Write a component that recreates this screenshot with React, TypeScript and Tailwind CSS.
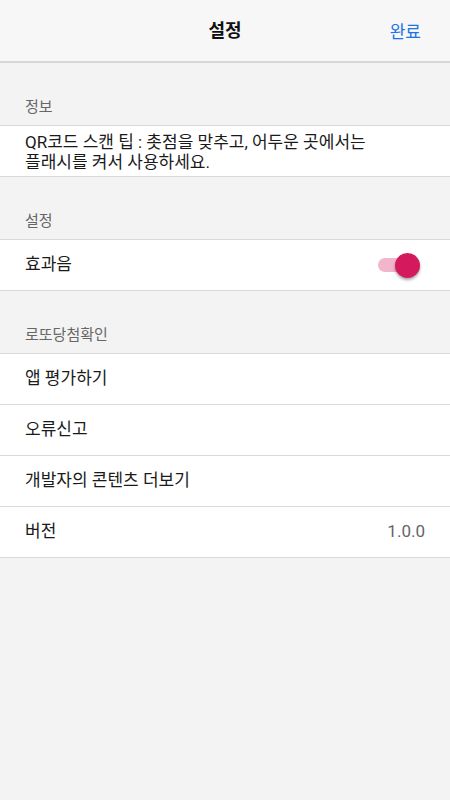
import React from "react";

const font = { fontFamily: '"Roboto", "Noto Sans CJK KR", sans-serif' };

function SectionLabel({ children }: { children: React.ReactNode }) {
  return (
    <div className="h-[63px] flex items-end pb-[7px] pl-[25px] text-[15px] text-[#666666] border-b border-[#d9d9d9]">
      {children}
    </div>
  );
}

function Row({ children, right }: { children: React.ReactNode; right?: React.ReactNode }) {
  return (
    <div className="h-[51px] bg-white flex items-center justify-between pl-[25px] pr-[26px] border-b border-[#d9d9d9] text-[17px] text-[#1a1a1a]">
      <span>{children}</span>
      {right}
    </div>
  );
}

export default function App() {
  return (
    <div className="w-[450px] h-[800px] bg-[#f3f3f3]" style={font}>
      <div className="h-[63px] bg-[#f7f7f7] border-b-2 border-[#d6d6d6] flex items-center justify-center relative">
        <span className="text-[18px] font-bold text-[#111]">설정</span>
        <span className="absolute right-[29px] top-[20px] text-[17px] text-[#1a73e8]">완료</span>
      </div>
      <SectionLabel>정보</SectionLabel>
      <div className="bg-white border-b border-[#d9d9d9] pl-[25px] pr-[26px] pt-[6px] text-[17px] leading-[20px] text-[#1a1a1a] h-[51px]">
        QR코드 스캔 팁 : 촛점을 맞추고, 어두운 곳에서는
        <br />
        플래시를 켜서 사용하세요.
      </div>
      <SectionLabel>설정</SectionLabel>
      <Row
        right={
          <div className="relative w-[42px] h-[25px] flex items-center mr-[4px]">
            <div className="w-[32px] h-[14px] rounded-full bg-[#f1b6cb]" />
            <div className="absolute right-0 top-0 w-[25px] h-[25px] rounded-full bg-[#d4195d] shadow-[0_2px_3px_rgba(0,0,0,0.35)]" />
          </div>
        }
      >
        효과음
      </Row>
      <SectionLabel>로또당첨확인</SectionLabel>
      <Row>앱 평가하기</Row>
      <Row>오류신고</Row>
      <Row>개발자의 콘텐츠 더보기</Row>
      <Row right={<span className="text-[#666666] mr-[-1px]">1.0.0</span>}>버전</Row>
    </div>
  );
}
